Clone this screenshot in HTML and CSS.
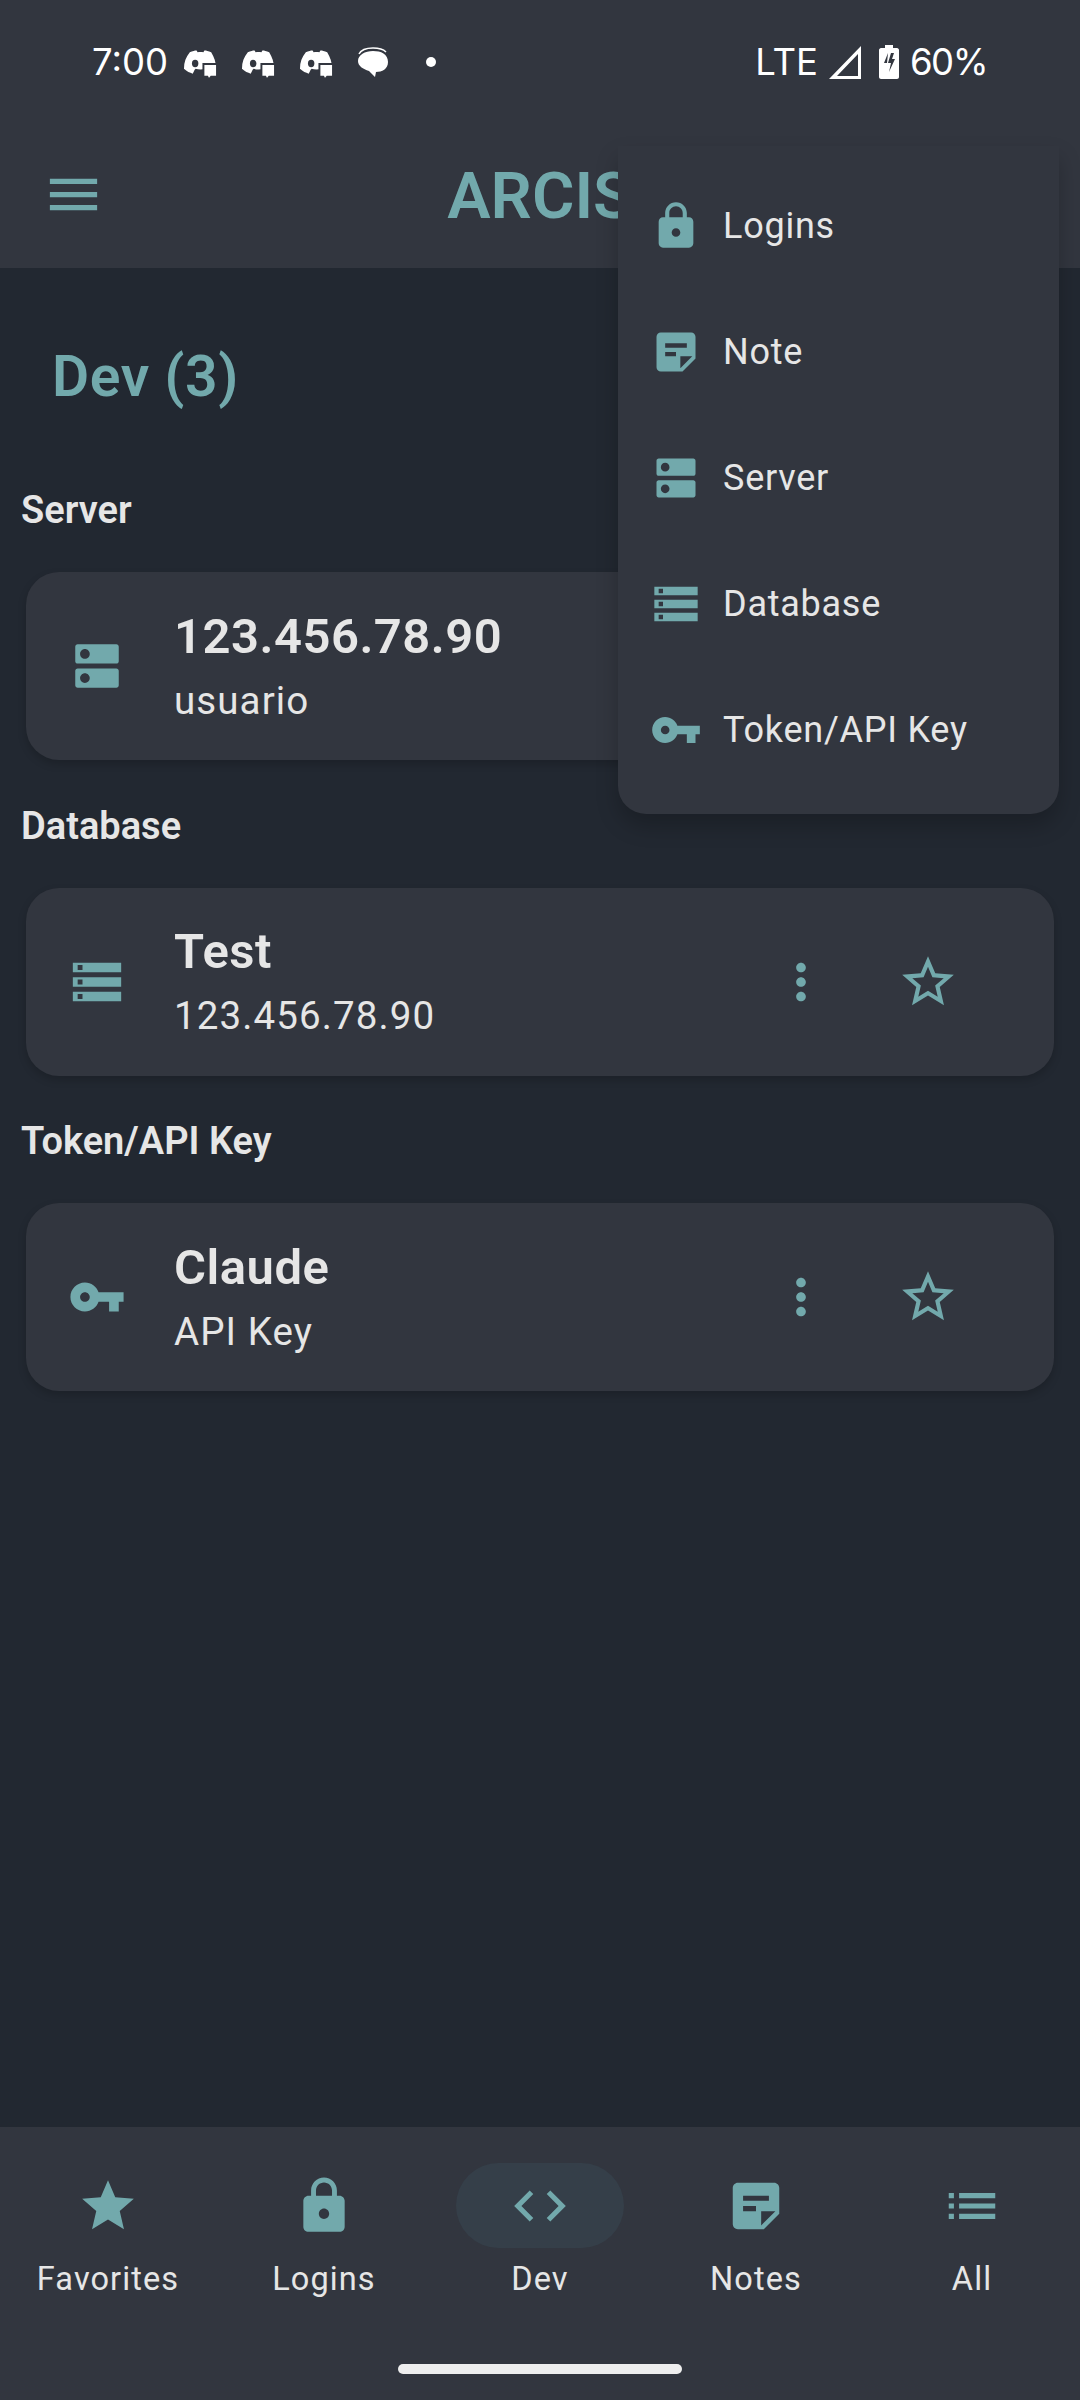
FILE: index.html
```html
<!DOCTYPE html>
<html lang="en">
<head>
	<meta charset="UTF-8">
	<title>ARCIS</title>
	<link rel="stylesheet" href="styles.css">
</head>
<body>
	<svg class="defs" width="0" height="0">
		<symbol id="i-lock" viewBox="0 0 24 24"><path d="M18 8h-1V6c0-2.76-2.24-5-5-5S7 3.24 7 6v2H6c-1.1 0-2 .9-2 2v10c0 1.1.9 2 2 2h12c1.1 0 2-.9 2-2V10c0-1.1-.9-2-2-2zm-6 9c-1.1 0-2-.9-2-2s.9-2 2-2 2 .9 2 2-.9 2-2 2zm3.1-9H8.9V6c0-1.71 1.39-3.1 3.1-3.1 1.71 0 3.1 1.39 3.1 3.1v2z"/></symbol>
		<symbol id="i-note" viewBox="0 0 24 24"><path d="M19 3H4.99C3.89 3 3 3.9 3 5l.01 14c0 1.1.89 2 1.99 2h10l6-6V5c0-1.1-.9-2-2-2zM7 8h10v2H7V8zm5 6H7v-2h5v2zm2 5.5V14h5.5L14 19.5z"/></symbol>
		<symbol id="i-server" viewBox="0 0 24 24"><path d="M20 13H4c-.55 0-1 .45-1 1v6c0 .55.45 1 1 1h16c.55 0 1-.45 1-1v-6c0-.55-.45-1-1-1zM7 19c-1.1 0-2-.9-2-2s.9-2 2-2 2 .9 2 2-.9 2-2 2zM20 3H4c-.55 0-1 .45-1 1v6c0 .55.45 1 1 1h16c.55 0 1-.45 1-1V4c0-.55-.45-1-1-1zM7 9c-1.1 0-2-.9-2-2s.9-2 2-2 2 .9 2 2-.9 2-2 2z"/></symbol>
		<symbol id="i-database" viewBox="0 0 24 24"><path d="M2 20h20v-4H2v4zm2-3h2v2H4v-2zM2 4v4h20V4H2zm4 3H4V5h2v2zm-4 7h20v-4H2v4zm2-3h2v2H4v-2z"/></symbol>
		<symbol id="i-key" viewBox="0 0 24 24"><path d="M12.65 10C11.83 7.67 9.61 6 7 6c-3.31 0-6 2.69-6 6s2.69 6 6 6c2.61 0 4.83-1.67 5.65-4H17v4h4v-4h2v-4H12.65zM7 14c-1.1 0-2-.9-2-2s.9-2 2-2 2 .9 2 2-.9 2-2 2z"/></symbol>
		<symbol id="i-star" viewBox="0 0 24 24"><path d="M12 17.27L18.18 21l-1.64-7.03L22 9.24l-7.19-.61L12 2 9.19 8.63 2 9.24l5.46 4.73L5.82 21z"/></symbol>
		<symbol id="i-star-border" viewBox="0 0 24 24"><path d="M22 9.24l-7.19-.62L12 2 9.19 8.63 2 9.24l5.46 4.73L5.82 21 12 17.27 18.18 21l-1.63-7.03L22 9.24zM12 15.4l-3.76 2.27 1-4.28-3.32-2.88 4.38-.38L12 6.1l1.71 4.04 4.38.38-3.32 2.88 1 4.28L12 15.4z"/></symbol>
		<symbol id="i-more" viewBox="0 0 24 24"><path d="M12 8c1.1 0 2-.9 2-2s-.9-2-2-2-2 .9-2 2 .9 2 2 2zm0 2c-1.1 0-2 .9-2 2s.9 2 2 2 2-.9 2-2-.9-2-2-2zm0 6c-1.1 0-2 .9-2 2s.9 2 2 2 2-.9 2-2-.9-2-2-2z"/></symbol>
		<symbol id="i-code" viewBox="0 0 24 24"><path d="M9.4 16.6L4.8 12l4.6-4.6L8 6l-6 6 6 6 1.4-1.4zm5.2 0l4.6-4.6-4.6-4.6L16 6l6 6-6 6-1.4-1.4z"/></symbol>
		<symbol id="i-list" viewBox="0 0 24 24"><path d="M3 13h2v-2H3v2zm0 4h2v-2H3v2zm0-8h2V7H3v2zm4 4h14v-2H7v2zm0 4h14v-2H7v2zM7 7v2h14V7H7z"/></symbol>
		<symbol id="i-menu" viewBox="0 0 24 24"><path d="M3 18h18v-2H3v2zm0-5h18v-2H3v2zm0-7v2h18V6H3z"/></symbol>
		<symbol id="i-discord" viewBox="0 0 36 30">
			<path fill="#fff" d="M7 3C10 1.500 12 1 14 1l1 2c2-.3 4-.3 6 0l1-2c2 0 4 .5 7 2 3 5 5 10 5 17-2.500 2-5 3-8 4l-2-3-1-1c-3 1-7 1-10 0l-1 1-2 4c-3-1-6-2-9-5C1 13 3 8 7 3z"/>
			<ellipse cx="12.500" cy="14.500" rx="3.300" ry="3.800" fill="#32363f"/>
			<path fill="#fff" stroke="#32363f" stroke-width="2" d="M21 15h14v13h-6l-2.500 3-1.500-3h-4z"/>
		</symbol>
		<symbol id="i-messages" viewBox="0 0 32 30">
			<path fill="#fff" d="M16 4c8 0 15 3 15 11 0 7-6 10-12 10l-1 5-6-6C6 22 1 19 1 14 1 8 8 4 16 4z"/>
			<path fill="none" stroke="#fff" stroke-width="1.500" d="M2 7c2-4 8-6 14-6 5 0 10 1 13 4"/>
		</symbol>
	</svg>

	<div class="app">
		<header class="top">
			<div class="status">
				<div class="status-left">
					<span class="status-time">7:00</span>
					<svg class="st-discord"><use href="#i-discord"/></svg>
					<svg class="st-discord"><use href="#i-discord"/></svg>
					<svg class="st-discord"><use href="#i-discord"/></svg>
					<svg class="st-messages"><use href="#i-messages"/></svg>
					<span class="st-dot"></span>
				</div>
				<div class="status-right">
					<span>LTE</span>
					<svg class="st-signal" viewBox="0 0 32 33"><path fill="#fff" fill-rule="evenodd" d="M0 33 32 0v33zM8 30h21V8z"/></svg>
					<svg class="st-battery" viewBox="0 0 20 34"><path fill="#fff" fill-rule="evenodd" d="M6 0h8v3h4c1 0 2 1 2 2v27c0 1-1 2-2 2H2c-1 0-2-1-2-2V5c0-1 1-2 2-2h4zM9 8 5 18h3zM12 8l-3 10h3l-2 9 6-13h-3l2-6z"/></svg>
					<span class="st-level">60%</span>
				</div>
			</div>
			<div class="toolbar">
				<svg class="toolbar-menu"><use href="#i-menu"/></svg>
				<h1 class="toolbar-title">ARCIS</h1>
				<span></span>
			</div>
		</header>

		<main class="content">
			<h2 class="page-title">Dev (3)</h2>

			<section class="group">
				<h3 class="group-label">Server</h3>
				<div class="card">
					<svg class="card-icon"><use href="#i-server"/></svg>
					<div class="card-text">
						<div class="card-name">123.456.78.90</div>
						<div class="card-sub">usuario</div>
					</div>
					<svg class="card-more"><use href="#i-more"/></svg>
					<svg class="card-star"><use href="#i-star-border"/></svg>
				</div>
			</section>

			<section class="group">
				<h3 class="group-label">Database</h3>
				<div class="card">
					<svg class="card-icon"><use href="#i-database"/></svg>
					<div class="card-text">
						<div class="card-name">Test</div>
						<div class="card-sub">123.456.78.90</div>
					</div>
					<svg class="card-more"><use href="#i-more"/></svg>
					<svg class="card-star"><use href="#i-star-border"/></svg>
				</div>
			</section>

			<section class="group">
				<h3 class="group-label">Token/API Key</h3>
				<div class="card">
					<svg class="card-icon"><use href="#i-key"/></svg>
					<div class="card-text">
						<div class="card-name">Claude</div>
						<div class="card-sub">API Key</div>
					</div>
					<svg class="card-more"><use href="#i-more"/></svg>
					<svg class="card-star"><use href="#i-star-border"/></svg>
				</div>
			</section>
		</main>

		<nav class="nav">
			<div class="nav-items">
				<div class="nav-item">
					<div class="nav-pill"><svg><use href="#i-star"/></svg></div>
					<span>Favorites</span>
				</div>
				<div class="nav-item">
					<div class="nav-pill"><svg><use href="#i-lock"/></svg></div>
					<span>Logins</span>
				</div>
				<div class="nav-item">
					<div class="nav-pill active"><svg><use href="#i-code"/></svg></div>
					<span>Dev</span>
				</div>
				<div class="nav-item">
					<div class="nav-pill"><svg><use href="#i-note"/></svg></div>
					<span>Notes</span>
				</div>
				<div class="nav-item">
					<div class="nav-pill"><svg><use href="#i-list"/></svg></div>
					<span>All</span>
				</div>
			</div>
			<div class="home-bar"></div>
		</nav>

		<ul class="popup">
			<li><svg><use href="#i-lock"/></svg>Logins</li>
			<li><svg><use href="#i-note"/></svg>Note</li>
			<li><svg><use href="#i-server"/></svg>Server</li>
			<li><svg><use href="#i-database"/></svg>Database</li>
			<li><svg><use href="#i-key"/></svg>Token/API Key</li>
		</ul>
	</div>
</body>
</html>
```
FILE: styles.css
```css
*{
	margin: 0;
	padding: 0;
	box-sizing: border-box;
	list-style-type: none;
}
body{
	width: 1080px;
	height: 2400px;
	overflow: hidden;
	background: #222831;
	font-family: Roboto, "Noto Sans", sans-serif;
	color: #e6e6e6;
}
svg{
	fill: #72a9ac;
	display: block;
	flex: none;
}
.defs{
	position: absolute;
}
.app{
	position: relative;
	height: 2400px;
	display: flex;
	flex-direction: column;
}

/* status bar + toolbar */
.top{
	height: 268px;
	background: #32363f;
}
.status{
	height: 124px;
	padding: 0 93px 0 92px;
	display: flex;
	justify-content: space-between;
	align-items: center;
	font-family: Inter, sans-serif;
	font-size: 36.5px;
	color: #fff;
}
.status-left,
.status-right{
	display: flex;
	align-items: center;
}
.status-time{
	width: 91px;
}
.st-discord{
	width: 35px;
	height: 30px;
	margin-right: 23px;
	margin-top: 3px;
}
.st-messages{
	width: 32px;
	height: 30px;
	margin-left: 0;
	margin-right: 37px;
}
.st-dot{
	width: 10px;
	height: 10px;
	border-radius: 50%;
	background: #fff;
}
.status-right svg{
	fill: #fff;
}
.st-signal{
	width: 32px;
	height: 33px;
	margin: 0 18px 0 11px;
}
.st-battery{
	width: 20px;
	height: 34px;
	margin-right: 11px;
}
.st-level{
	letter-spacing: -1.5px;
}
.toolbar{
	height: 144px;
	padding: 0 42px;
	display: grid;
	grid-template-columns: 1fr auto 1fr;
	align-items: center;
}
.toolbar-menu{
	width: 63px;
	height: 63px;
	margin-top: -3px;
}
.toolbar-title{
	font-size: 65px;
	font-weight: 600;
	color: #72a9ac;
}

/* list */
.content{
	flex: 1;
	padding: 0 26px;
}
.page-title{
	margin: 72px 0 73px 26px;
	height: 74px;
	line-height: 74px;
	font-size: 57px;
	font-weight: 600;
	letter-spacing: .6px;
	color: #72a9ac;
}
.group{
	margin-bottom: 42.5px;
}
.group-label{
	margin: 0 0 39px -5px;
	height: 46px;
	line-height: 46px;
	font-size: 38px;
	font-weight: 600;
}
.card{
	height: 188px;
	padding: 0 95px 0 42px;
	display: flex;
	align-items: center;
	background: #32363f;
	border-radius: 33px;
	box-shadow: 0 4px 8px rgba(0,0,0,.18);
}
.card-icon{
	width: 58px;
	height: 58px;
}
.card-text{
	flex: 1;
	margin-left: 48px;
	margin-bottom: 1px;
}
.card-name{
	font-size: 49px;
	font-weight: 600;
	letter-spacing: .5px;
	line-height: 58px;
}
.card-sub{
	margin-top: 12px;
	font-size: 38.5px;
	font-weight: 400;
	letter-spacing: 1.1px;
	line-height: 46px;
}
.card-more{
	width: 58px;
	height: 58px;
}
.card-star{
	width: 62px;
	height: 62px;
	margin-left: 67px;
}

/* bottom navigation */
.nav{
	height: 273px;
	padding-top: 36px;
	background: #32363f;
	display: flex;
	flex-direction: column;
}
.nav-items{
	display: flex;
}
.nav-item{
	flex: 1;
	display: flex;
	flex-direction: column;
	align-items: center;
	font-size: 32.5px;
	font-weight: 450;
	letter-spacing: 1.1px;
}
.nav-pill{
	width: 168px;
	height: 85px;
	margin-bottom: 12px;
	border-radius: 43px;
	display: flex;
	align-items: center;
	justify-content: center;
}
.nav-pill.active{
	background: #353f49;
}
.nav-pill svg{
	width: 62px;
	height: 62px;
}
.home-bar{
	width: 284px;
	height: 10px;
	margin: auto auto 26px;
	background: #eee;
	border-radius: 5px;
}

/* add menu, lies over the toolbar and first card */
.popup{
	position: absolute;
	left: 618px;
	top: 146px;
	width: 441px;
	height: 668px;
	padding-top: 17px;
	background: #32363f;
	border-radius: 0 0 28px 28px;
	box-shadow: 0 12px 22px rgba(0,0,0,.22);
}
.popup li{
	height: 126px;
	padding-left: 32px;
	display: flex;
	align-items: center;
	font-size: 36px;
	font-weight: 450;
	letter-spacing: .75px;
}
.popup svg{
	width: 52px;
	height: 52px;
	margin-right: 21px;
}
```
